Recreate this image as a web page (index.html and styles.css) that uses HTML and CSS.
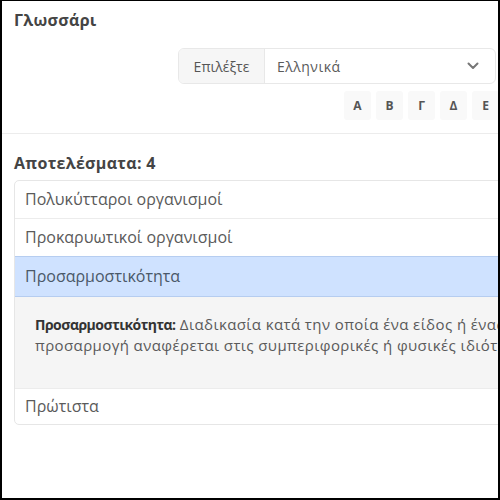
FILE: index.html
```html
<!DOCTYPE html>
<html lang="el">
<head>
<meta charset="utf-8">
<title>Γλωσσάρι</title>
<link rel="stylesheet" href="styles.css">
</head>
<body>
<div class="frame">
  <div class="page">
    <header class="top">
      <h1 class="title">Γλωσσάρι</h1>
      <div class="controls">
        <div class="lang-group">
          <span class="lang-label">Επιλέξτε</span>
          <div class="lang-select">
            <span>Ελληνικά</span>
            <svg class="chev" width="12" height="8" viewBox="0 0 12 8"><path d="M1.5 1.5 6 6 10.5 1.5" fill="none" stroke="#777" stroke-width="2" stroke-linecap="round" stroke-linejoin="round"/></svg>
          </div>
        </div>
        <div class="letters">
          <button class="letter">Α</button>
          <button class="letter">Β</button>
          <button class="letter">Γ</button>
          <button class="letter">Δ</button>
          <button class="letter">Ε</button>
        </div>
      </div>
    </header>
    <section class="results">
      <h2 class="count">Αποτελέσματα: 4</h2>
      <ul class="list">
        <li class="item">Πολυκύτταροι οργανισμοί</li>
        <li class="item">Προκαρυωτικοί οργανισμοί</li>
        <li class="item active">Προσαρμοστικότητα</li>
        <li class="detail">
          <p><strong>Προσαρμοστικότητα:</strong> Διαδικασία κατά την οποία ένα είδος ή ένας οργανισμός γίνεται καταλληλότερος για το περιβάλλον του. Η<br>προσαρμογή αναφέρεται στις συμπεριφορικές ή φυσικές ιδιότητες ενός οργανισμού που τον βοηθούν να επιβιώσει.</p>
        </li>
        <li class="item last">Πρώτιστα</li>
      </ul>
    </section>
  </div>
</div>
</body>
</html>
```

FILE: styles.css
```css
* { box-sizing: border-box; }
html, body { margin: 0; padding: 0; background: #000; }
body { font-family: "Open Sans", "Noto Sans", sans-serif; color: #555; }

.frame {
  width: 500px;
  height: 500px;
  border: 2px solid #000;
  border-top-width: 1px;
  background: #fff;
  overflow: hidden;
}

.page { width: 760px; }

.top {
  padding: 9px 0 13px 12px;
  border-bottom: 1px solid #ececec;
}
.title {
  margin: 0 0 18px;
  font-size: 16px;
  line-height: 20px;
  font-weight: 700;
  color: #444;
  letter-spacing: 0.3px;
}
.controls {
  width: 482px;
  display: flex;
  flex-direction: column;
  align-items: flex-end;
  gap: 7px;
}
.lang-group {
  display: flex;
  height: 36px;
  border: 1px solid #e8e8e8;
  border-radius: 6px;
  overflow: hidden;
  font-size: 14px;
}
.lang-label {
  width: 86px;
  display: flex;
  align-items: center;
  justify-content: center;
  background: #f6f6f6;
  border-right: 1px solid #e8e8e8;
  color: #555;
}
.lang-select {
  width: 230px;
  display: flex;
  align-items: center;
  justify-content: space-between;
  padding: 0 16px 0 12px;
  color: #5a5a5a;
  letter-spacing: 0.5px;
}
.chev { display: block; }

.letters { display: flex; gap: 5px; margin-right: -3px; }
.letter {
  width: 27px;
  height: 29px;
  padding: 0;
  border: 0;
  border-radius: 3px;
  background: #f9f9f9;
  font-family: inherit;
  font-size: 12px;
  font-weight: 700;
  color: #555;
  line-height: 29px;
}

.results { padding: 0 0 0 12px; }
.count {
  margin: 19px 0 7px;
  font-size: 16px;
  line-height: 20px;
  font-weight: 700;
  color: #444;
  letter-spacing: 0.3px;
}
.list {
  list-style: none;
  margin: 0;
  padding: 0;
  border: 1px solid #e6e6e6;
  border-radius: 5px;
  overflow: hidden;
}
.item {
  padding: 7px 10px;
  font-size: 16px;
  line-height: 23px;
  color: #5a5a5a;
  border-top: 1px solid #ececec;
}
.item:first-child { border-top: 0; }
.item.active {
  background: #cfe2ff;
  border-top: 1px solid #b6cdf0;
  border-bottom: 1px solid #b6cdf0;
  padding: 8px 10px;
  color: #4a5868;
}
.detail {
  background: #f5f5f5;
  padding: 17px 20px 17px;
}
.detail p {
  margin: 0 0 16px;
  font-size: 15px;
  line-height: 20px;
  letter-spacing: 0.4px;
  color: #5a5a5a;
  white-space: nowrap;
}
.detail strong {
  color: #333;
  font-size: 14px;
  letter-spacing: -0.5px;
}
.item.last { border-top: 1px solid #ececec; padding: 6px 10px; }
```
